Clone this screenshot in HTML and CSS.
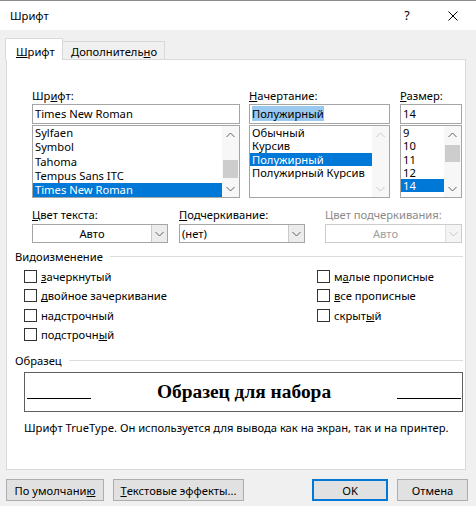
FILE: index.html
```html
<!DOCTYPE html>
<html lang="ru">
<head>
<meta charset="utf-8">
<title>Шрифт</title>
<link rel="stylesheet" href="styles.css">
</head>
<body>
<div class="window">
  <div class="titlebar">
    <div class="title">Шрифт</div>
    <div class="cap-btn help">?</div>
    <div class="cap-btn close">
      <svg width="10" height="10" viewBox="0 0 10 10"><path d="M0.5 0.5 L9.5 9.5 M9.5 0.5 L0.5 9.5" stroke="#000" stroke-width="1" fill="none"/></svg>
    </div>
  </div>

  <div class="tabs">
    <div class="tab active"><u>Ш</u>рифт</div>
    <div class="tab">Дополнитель<u>н</u>о</div>
  </div>

  <div class="panel">
    <div class="fontrow">
      <div class="col col-font">
        <div class="label">Шр<u>и</u>фт:</div>
        <div class="field">Times New Roman</div>
        <div class="list">
          <div class="items rows-font">
            <div class="item">Sylfaen</div>
            <div class="item">Symbol</div>
            <div class="item">Tahoma</div>
            <div class="item">Tempus Sans ITC</div>
            <div class="item sel">Times New Roman</div>
          </div>
          <div class="scroll">
            <div class="arrow"><svg width="9" height="6" viewBox="0 0 9 6"><path d="M0.5 5 L4.5 1 L8.5 5" stroke="#606060" fill="none"/></svg></div>
            <div class="track"><div class="thumb thumb-font"></div></div>
            <div class="arrow"><svg width="9" height="6" viewBox="0 0 9 6"><path d="M0.5 1 L4.5 5 L8.5 1" stroke="#606060" fill="none"/></svg></div>
          </div>
        </div>
      </div>
      <div class="col col-style">
        <div class="label"><u>Н</u>ачертание:</div>
        <div class="field"><span class="hl">Полужирный</span></div>
        <div class="list">
          <div class="items rows-small">
            <div class="item">Обычный</div>
            <div class="item">Курсив</div>
            <div class="item sel">Полужирный</div>
            <div class="item">Полужирный Курсив</div>
          </div>
          <div class="scroll disabled">
            <div class="arrow"><svg width="9" height="6" viewBox="0 0 9 6"><path d="M0.5 5 L4.5 1 L8.5 5" stroke="#c8c8c8" fill="none"/></svg></div>
            <div class="track"></div>
            <div class="arrow"><svg width="9" height="6" viewBox="0 0 9 6"><path d="M0.5 1 L4.5 5 L8.5 1" stroke="#c8c8c8" fill="none"/></svg></div>
          </div>
        </div>
      </div>
      <div class="col col-size">
        <div class="label"><u>Р</u>азмер:</div>
        <div class="field">14</div>
        <div class="list">
          <div class="items rows-small">
            <div class="item">9</div>
            <div class="item">10</div>
            <div class="item">11</div>
            <div class="item">12</div>
            <div class="item sel">14</div>
          </div>
          <div class="scroll">
            <div class="arrow"><svg width="9" height="6" viewBox="0 0 9 6"><path d="M0.5 5 L4.5 1 L8.5 5" stroke="#606060" fill="none"/></svg></div>
            <div class="track"><div class="thumb thumb-size"></div></div>
            <div class="arrow"><svg width="9" height="6" viewBox="0 0 9 6"><path d="M0.5 1 L4.5 5 L8.5 1" stroke="#606060" fill="none"/></svg></div>
          </div>
        </div>
      </div>
    </div>

    <div class="colorrow">
      <div class="dcol dcol-color">
        <div class="label"><u>Ц</u>вет текста:</div>
        <div class="combo">
          <div class="combo-text center">Авто</div>
          <div class="combo-btn"><svg width="9" height="6" viewBox="0 0 9 6"><path d="M0.5 1 L4.5 5 L8.5 1" stroke="#606060" fill="none"/></svg></div>
        </div>
      </div>
      <div class="dcol dcol-under">
        <div class="label"><u>П</u>одчеркивание:</div>
        <div class="combo">
          <div class="combo-text">(нет)</div>
          <div class="combo-btn"><svg width="9" height="6" viewBox="0 0 9 6"><path d="M0.5 1 L4.5 5 L8.5 1" stroke="#606060" fill="none"/></svg></div>
        </div>
      </div>
      <div class="dcol dcol-ucolor">
        <div class="label disabled-text">Цвет подчеркивания:</div>
        <div class="combo disabled">
          <div class="combo-text center">Авто</div>
          <div class="combo-btn"><svg width="9" height="6" viewBox="0 0 9 6"><path d="M0.5 1 L4.5 5 L8.5 1" stroke="#c8c8c8" fill="none"/></svg></div>
        </div>
      </div>
    </div>

    <div class="group-head head-effects"><span>Видоизменение</span><div class="rule"></div></div>
    <div class="checks">
      <div class="check"><span class="box"></span><span><u>з</u>ачеркнутый</span></div>
      <div class="check"><span class="box"></span><span><u>д</u>войное зачеркивание</span></div>
      <div class="check"><span class="box"></span><span>на<u>д</u>строчный</span></div>
      <div class="check"><span class="box"></span><span>подстрочн<u>ы</u>й</span></div>
      <div class="check"><span class="box"></span><span>м<u>а</u>лые прописные</span></div>
      <div class="check"><span class="box"></span><span><u>в</u>се прописные</span></div>
      <div class="check"><span class="box"></span><span>скрыт<u>ы</u>й</span></div>
    </div>

    <div class="group-head head-sample"><span>Образец</span><div class="rule"></div></div>
    <div class="sample">
      <div class="sline"></div>
      <div class="stext">Образец для набора</div>
      <div class="sline"></div>
    </div>
    <div class="desc">Шрифт TrueType. Он используется для вывода как на экран, так и на принтер.</div>
  </div>

  <div class="buttons">
    <div class="btn btn-default">По умолчани<u>ю</u></div>
    <div class="btn btn-effects"><u>Т</u>екстовые эффекты...</div>
    <div class="spacer"></div>
    <div class="btn btn-ok">OK</div>
    <div class="btn btn-cancel">Отмена</div>
  </div>
</div>
</body>
</html>
```

FILE: styles.css
```css
html, body {
  margin: 0;
  padding: 0;
}
body {
  width: 476px;
  height: 506px;
  overflow: hidden;
  background: #f0f0f0;
  font-family: "Noto Sans", "Open Sans", sans-serif;
  font-size: 11.2px;
  color: #000;
}
u {
  text-decoration: underline;
  text-underline-offset: 1px;
}
.window {
  border-top: 1px solid #8c8c8c;
}
.titlebar {
  height: 29px;
  background: #fff;
  display: flex;
  align-items: center;
}
.title {
  flex: 1;
  padding-left: 10px;
}
.cap-btn {
  width: 46px;
  height: 29px;
  display: flex;
  align-items: center;
  justify-content: center;
}
.help {
  font-size: 12.5px;
}

/* tabs */
.tabs {
  display: flex;
  align-items: flex-end;
  padding: 8px 0 0 5px;
  margin-bottom: -1px;
  position: relative;
  z-index: 1;
}
.tab {
  box-sizing: border-box;
  border: 1px solid #d9d9d9;
  border-bottom: none;
  line-height: 16px;
  background: #f0f0f0;
}
.tab.active {
  width: 58px;
  height: 22px;
  padding: 5px 0 0 10px;
  background: #fff;
}
.tab:not(.active) {
  width: 102px;
  height: 18px;
  padding: 2px 0 0 8px;
  margin-bottom: 1px;
  border-left: none;
}

/* panel */
.panel {
  box-sizing: border-box;
  height: 411px;
  margin: 0 10px 0 6px;
  background: #fff;
  border: 1px solid #d9d9d9;
  padding-top: 28px;
}
.label {
  height: 16px;
  line-height: 16px;
  white-space: nowrap;
}
.disabled-text {
  color: #8a8a8a;
}

.fontrow {
  display: flex;
  margin-left: 25px;
}
.col-font { width: 208px; }
.col-style { width: 141px; margin-left: 9px; }
.col-size { width: 62px; margin-left: 10px; }

.field {
  box-sizing: border-box;
  height: 20px;
  border: 1px solid #a5a5a5;
  padding-left: 2px;
  line-height: 18px;
  white-space: nowrap;
}
.hl {
  background: #99c9ef;
}
.list {
  box-sizing: border-box;
  height: 73px;
  margin-top: 1px;
  border: 1px solid #a5a5a5;
  display: flex;
  overflow: hidden;
}
.items {
  flex: 1;
  min-width: 0;
}
.item {
  padding-left: 2px;
  white-space: nowrap;
  overflow: hidden;
}
.rows-font .item {
  height: 14.3px;
  line-height: 14.3px;
}
.rows-small .item {
  height: 13.3px;
  line-height: 13.3px;
}
.item.sel {
  background: #0078d7;
  color: #fff;
}
.scroll {
  width: 17px;
  display: flex;
  flex-direction: column;
  background: #f7f7f7;
}
.arrow {
  height: 17px;
  display: flex;
  align-items: center;
  justify-content: center;
  flex: none;
}
.track {
  flex: 1;
  padding: 0 1px;
}
.thumb {
  background: #cdcdcd;
}
.thumb-font {
  margin-top: 17px;
  height: 18px;
}
.thumb-size {
  margin-top: 2px;
  height: 17px;
}

/* combos */
.colorrow {
  display: flex;
  margin: 9px 0 0 25px;
}
.dcol-color { width: 136px; }
.dcol-under { width: 126px; margin-left: 11px; }
.dcol-ucolor { width: 137px; margin-left: 20px; }
.dcol .label {
  margin-bottom: 1px;
}
.combo {
  box-sizing: border-box;
  height: 19px;
  border: 1px solid #a5a5a5;
  display: flex;
  background: #fff;
}
.combo-text {
  flex: 1;
  line-height: 17px;
  padding-left: 2px;
  white-space: nowrap;
}
.combo-text.center {
  text-align: center;
  padding-left: 0;
}
.combo-btn {
  width: 15px;
  border-left: 1px solid #c9c9c9;
  background: #ececec;
  display: flex;
  align-items: center;
  justify-content: center;
}
.combo.disabled {
  border-color: #cccccc;
  color: #a0a0a0;
}
.combo.disabled .combo-btn {
  background: #f4f4f4;
  border-left-color: #e0e0e0;
}

/* groups */
.group-head {
  display: flex;
  align-items: center;
  height: 16px;
  padding-left: 8px;
  margin-right: 2px;
}
.group-head .rule {
  flex: 1;
  height: 1px;
  background: #dcdcdc;
  margin-left: 7px;
}
.head-effects {
  margin-top: 5px;
}
.checks {
  display: grid;
  grid-template-columns: 293px 1fr;
  grid-template-rows: repeat(4, 19.3px);
  grid-auto-flow: column;
  margin-top: 3px;
  padding-left: 17px;
}
.check {
  display: flex;
  align-items: center;
  white-space: nowrap;
}
.box {
  box-sizing: border-box;
  width: 13px;
  height: 13px;
  border: 1px solid #333;
  background: #fff;
  margin-right: 4px;
  flex: none;
}
.head-sample {
  margin-top: 8px;
}
.sample {
  box-sizing: border-box;
  height: 40px;
  margin: 4px 2px 0 17px;
  border: 1px solid #5f5f5f;
  display: flex;
  padding: 0 1px;
}
.sline {
  width: 64px;
  height: 1px;
  background: #000;
  margin-top: 25px;
  flex: none;
}
.sample .sline:first-child {
  margin-left: 1px;
}
.stext {
  flex: 1;
  text-align: center;
  font-family: "Liberation Serif", "Times New Roman", serif;
  font-weight: bold;
  font-size: 19.4px;
  line-height: 38px;
}
.desc {
  margin-top: 8px;
  padding-left: 17px;
  line-height: 16px;
  white-space: nowrap;
}

/* buttons */
.buttons {
  display: flex;
  margin-top: 9px;
  padding: 0 8px 0 6px;
}
.spacer {
  flex: 1;
}
.btn {
  box-sizing: border-box;
  height: 22px;
  border: 1px solid #adadad;
  background: #e1e1e1;
  display: flex;
  align-items: center;
  justify-content: center;
  white-space: nowrap;
}
.btn-default { width: 98px; }
.btn-effects { width: 131px; margin-left: 9px; }
.btn-ok {
  width: 76px;
  border: 2px solid #0078d7;
}
.btn-cancel { width: 71px; margin-left: 9px; }
```
